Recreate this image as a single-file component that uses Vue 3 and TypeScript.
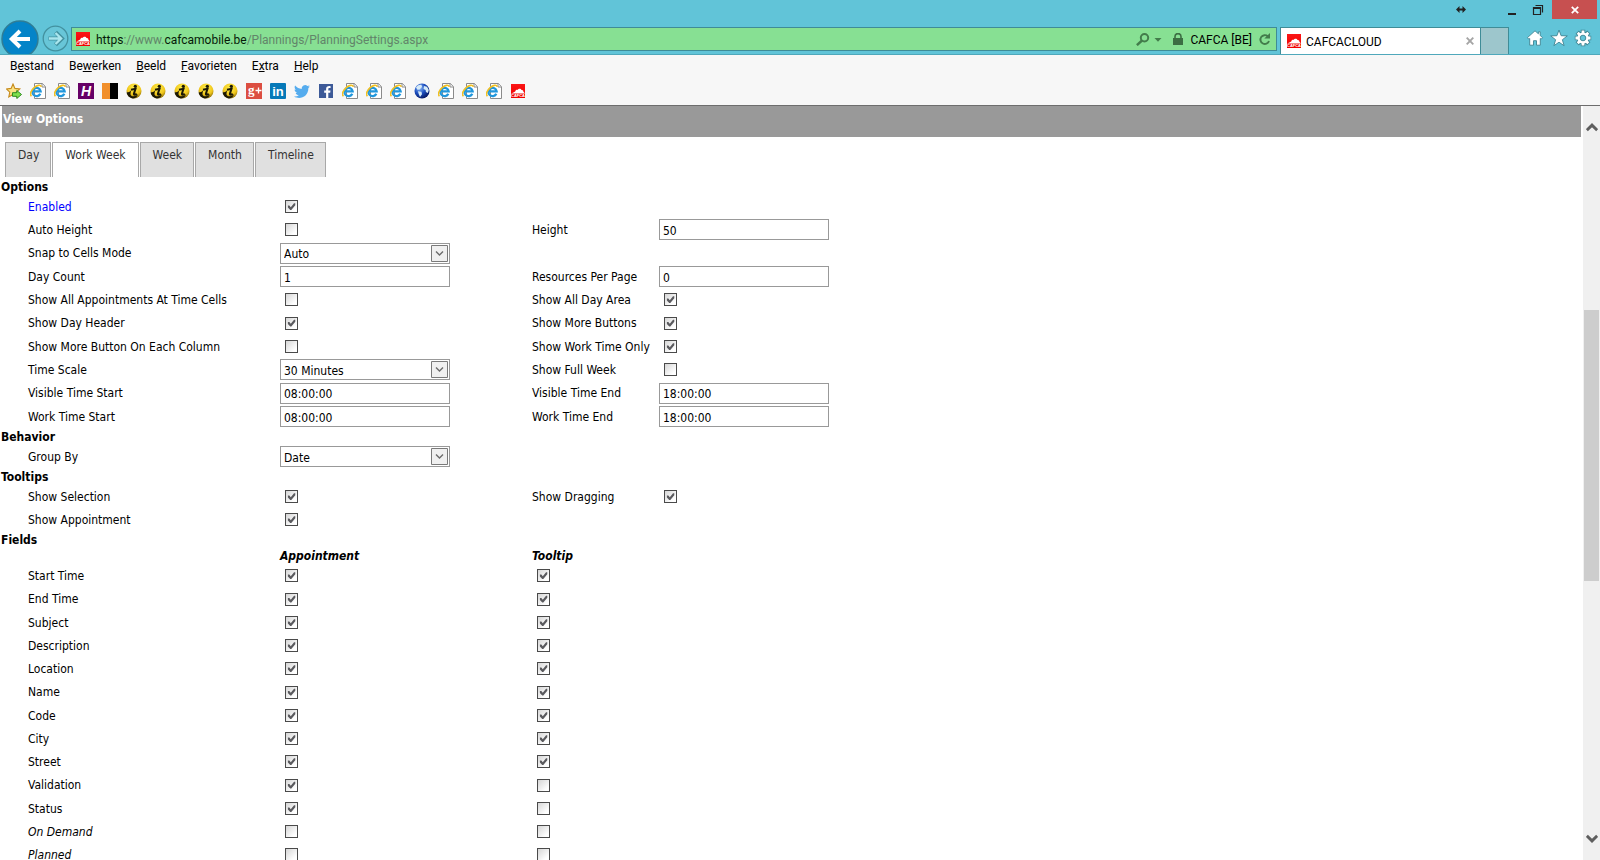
<script setup lang="ts">
import { ref } from 'vue'

interface Control {
  id: string
  label: string
  kind: 'check' | 'text' | 'select'
  value: string | boolean
  accent?: boolean
}
interface Row {
  left: Control
  right?: Control
}
interface Group {
  title: string
  rows: Row[]
}
interface Field {
  name: string
  appointment: boolean
  tooltip: boolean
  italic?: boolean
}

const menus = [
  ['B', 'e', 'stand'],
  ['Be', 'w', 'erken'],
  ['', 'B', 'eeld'],
  ['', 'F', 'avorieten'],
  ['E', 'x', 'tra'],
  ['', 'H', 'elp'],
]

const bookmarks = [
  'star', 'ie', 'ie', 'h', 'split', 'info', 'info', 'info', 'info', 'info', 'gplus',
  'linkedin', 'twitter', 'facebook', 'ie', 'ie', 'ie', 'globe', 'ie', 'ie', 'ie', 'cafca',
]

const views = ['Day', 'Work Week', 'Week', 'Month', 'Timeline']
const activeView = ref('Work Week')

const check = (id: string, label: string, value: boolean, accent = false): Control => ({ id, label, kind: 'check', value, accent })
const text = (id: string, label: string, value: string): Control => ({ id, label, kind: 'text', value })
const select = (id: string, label: string, value: string): Control => ({ id, label, kind: 'select', value })

const groups = ref<Group[]>([
  {
    title: 'Options',
    rows: [
      { left: check('enabled', 'Enabled', true, true) },
      { left: check('auto-height', 'Auto Height', false), right: text('height', 'Height', '50') },
      { left: select('snap', 'Snap to Cells Mode', 'Auto') },
      { left: text('day-count', 'Day Count', '1'), right: text('resources', 'Resources Per Page', '0') },
      { left: check('time-cells', 'Show All Appointments At Time Cells', false), right: check('all-day', 'Show All Day Area', true) },
      { left: check('day-header', 'Show Day Header', true), right: check('more-buttons', 'Show More Buttons', true) },
      { left: check('more-column', 'Show More Button On Each Column', false), right: check('work-time', 'Show Work Time Only', true) },
      { left: select('time-scale', 'Time Scale', '30 Minutes'), right: check('full-week', 'Show Full Week', false) },
      { left: text('visible-start', 'Visible Time Start', '08:00:00'), right: text('visible-end', 'Visible Time End', '18:00:00') },
      { left: text('work-start', 'Work Time Start', '08:00:00'), right: text('work-end', 'Work Time End', '18:00:00') },
    ],
  },
  { title: 'Behavior', rows: [{ left: select('group-by', 'Group By', 'Date') }] },
  {
    title: 'Tooltips',
    rows: [
      { left: check('selection', 'Show Selection', true), right: check('dragging', 'Show Dragging', true) },
      { left: check('appointment', 'Show Appointment', true) },
    ],
  },
])

const fields = ref<Field[]>([
  ...['Start Time', 'End Time', 'Subject', 'Description', 'Location', 'Name', 'Code', 'City', 'Street'].map((name) => ({
    name,
    appointment: true,
    tooltip: true,
  })),
  { name: 'Validation', appointment: true, tooltip: false },
  { name: 'Status', appointment: true, tooltip: false },
  { name: 'On Demand', appointment: false, tooltip: false, italic: true },
  { name: 'Planned', appointment: false, tooltip: false, italic: true },
])

const scroll = { before: 162, thumb: 271, after: 237 }

const cells = (row: Row): Control[] => (row.right ? [row.left, row.right] : [row.left])
</script>

<template>
  <div class="window">
    <svg class="defs" width="0" height="0" aria-hidden="true">
      <defs>
        <linearGradient id="red" x1="0" y1="0" x2="0" y2="1"><stop offset="0" stop-color="#fb1616" /><stop offset="1" stop-color="#f00000" /></linearGradient>
        <radialGradient id="gold" cx=".5" cy=".3" r=".75"><stop offset="0" stop-color="#fff04e" /><stop offset=".6" stop-color="#f0c61c" /><stop offset="1" stop-color="#6e5406" /></radialGradient>
        <radialGradient id="sea" cx=".35" cy=".3" r=".75"><stop offset="0" stop-color="#8fbcf8" /><stop offset=".5" stop-color="#1c4fc0" /><stop offset="1" stop-color="#04145e" /></radialGradient>
        <symbol id="cafca" viewBox="0 0 14 14">
          <path d="M0 0h14v14H0z" fill="url(#red)" />
          <path d="M0 9.500C2 8.800 3 8.300 4.200 7.500 4.500 6 6 5.700 6.600 5.900 7.500 4.200 10 4.400 10.500 6c1.500-.2 2 1 1.900 1.700L14 9.600z" fill="#fff" />
          <text x="7" y="13.200" text-anchor="middle" font-size="4" font-weight="700" fill="#fff" font-family="Liberation Sans, sans-serif">CAFCA</text>
        </symbol>
      </defs>
    </svg>

    <header class="chrome">
      <div class="caption">
        <svg class="resize" viewBox="0 0 10 7" width="10" height="7"><path d="M0 3.500 3.500 0v2.500h3V0L10 3.500 6.500 7V4.500h-3V7z" fill="#222" /></svg>
        <button class="cap" aria-label="Minimize"><svg viewBox="0 0 14 14" width="14" height="14"><path d="M3 10h8v2H3z" fill="#222" /></svg></button>
        <button class="cap" aria-label="Restore"><svg viewBox="0 0 14 14" width="14" height="14"><path d="M2.500 4.500h7v7h-7zM2 5.500h8M4.500 2.500h7v7" fill="none" stroke="#222" stroke-width="1.200" /></svg></button>
        <button class="cap close" aria-label="Close"><svg viewBox="0 0 8 8" width="8" height="8"><path d="m.8.800 6.400 6.400m0-6.400L.8 7.200" stroke="#fff" stroke-width="1.800" /></svg></button>
      </div>

      <nav class="navbar">
        <div class="history">
          <button class="back" aria-label="Back">
            <svg viewBox="0 0 38 38" width="38" height="38"><circle cx="19" cy="19" r="18" fill="#0484c8" stroke="#2f7d96" stroke-width="1.500" /><path d="M29 19H11m8-8-8.200 8 8.200 8" fill="none" stroke="#fff" stroke-width="4" /></svg>
          </button>
          <button class="forward" aria-label="Forward">
            <svg viewBox="0 0 27 27" width="27" height="27"><circle cx="13.500" cy="13.500" r="12.300" fill="#68c6d8" stroke="#43919f" stroke-width="1.300" /><path d="M6.500 13.500h13m-6-6.200 6.300 6.200-6.300 6.200" fill="none" stroke="#43919f" stroke-width="4.200" /><path d="M7 13.500h12m-5.500-5.500 5.600 5.500-5.600 5.500" fill="none" stroke="#a9e6ee" stroke-width="2.400" /></svg>
          </button>
        </div>

        <div class="address">
          <svg width="14" height="14"><use href="#cafca" /></svg>
          <div class="url" role="textbox" contenteditable="true" spellcheck="false"><b>https</b>://www.<b>cafcamobile.be</b>/Plannings/PlanningSettings.aspx</div>
          <button class="tool" aria-label="Search">
            <svg viewBox="0 0 26 13" width="26" height="13"><circle cx="8.500" cy="4.700" r="3.700" fill="none" stroke="#437c4b" stroke-width="2" /><path d="M6 7.500.9 12.200" stroke="#437c4b" stroke-width="2.400" /><path d="M18.500 5h7L22 8.800z" fill="#437c4b" /></svg>
          </button>
          <button class="cert">
            <svg viewBox="0 0 10 12" width="10" height="12"><path d="M0 5h10v7H0z" fill="#3c6e43" /><path d="M2 6V3.600a3 3 0 0 1 6 0V6" fill="none" stroke="#3c6e43" stroke-width="1.600" /></svg>
            <span>CAFCA [BE]</span>
          </button>
          <button class="tool" aria-label="Refresh">
            <svg viewBox="0 0 12 13" width="12" height="13"><path d="M8.800 3.300A4.400 4.400 0 1 0 10 8" fill="none" stroke="#437c4b" stroke-width="1.900" /><path d="M11 0v5.500H5.300z" fill="#437c4b" /></svg>
          </button>
        </div>

        <div class="pages">
          <div class="page-tab">
            <svg width="14" height="14"><use href="#cafca" /></svg>
            <span>CAFCACLOUD</span>
            <button class="tool" aria-label="Close tab"><svg viewBox="0 0 8 8" width="8" height="8"><path d="m.7.700 6.600 6.600m0-6.600L.7 7.300" stroke="#a5a5a5" stroke-width="1.900" /></svg></button>
          </div>
          <button class="new-tab" aria-label="New tab"></button>
        </div>

        <div class="actions">
          <button class="tool" aria-label="Home">
            <svg viewBox="0 0 18 18" width="18" height="18"><path d="M9 1.800 1.500 8.600l1.300 1.600.9-.7v6.700h3.800v-4.500h3v4.500h3.800V9.500l.9.700 1.300-1.600-2.300-2.100V2.800h-1.800v2z" fill="#fff" stroke="#3d8593" stroke-width=".9" /></svg>
          </button>
          <button class="tool" aria-label="Favorites">
            <svg viewBox="0 0 18 18" width="18" height="18"><path d="m9 1 2.100 5.700 6.200.2-4.900 3.800 1.700 6L9 13.200l-5.100 3.500 1.700-6L.7 6.900l6.200-.2z" fill="#fff" stroke="#3d8593" stroke-width=".9" /></svg>
          </button>
          <button class="tool" aria-label="Tools">
            <svg viewBox="0 0 18 18" width="18" height="18"><g stroke="#3d8593" stroke-width="4.600"><path d="M9 .8v16.400M.8 9h16.400M3.200 3.200l11.600 11.600m0-11.600L3.200 14.800" /></g><circle cx="9" cy="9" r="6.400" fill="#3d8593" /><g stroke="#fff" stroke-width="2.800"><path d="M9 1.500v15M1.500 9h15M3.700 3.700l10.600 10.600m0-10.600L3.700 14.300" /></g><circle cx="9" cy="9" r="5.600" fill="#fff" /><circle cx="9" cy="9" r="2.800" fill="#61c4d8" stroke="#3d8593" stroke-width=".9" /></svg>
          </button>
        </div>
      </nav>
    </header>

    <div class="bars">
      <div class="menus">
        <button v-for="m in menus" :key="m.join('')">{{ m[0] }}<u>{{ m[1] }}</u>{{ m[2] }}</button>
      </div>
      <div class="bookmarks">
        <button v-for="(kind, i) in bookmarks" :key="i" :aria-label="kind">
          <svg viewBox="0 0 16 16" width="16" height="16">
            <g v-if="kind === 'star'">
              <path d="m7 1 1.900 4.400 4.900.5-3.600 3.300 1 4.800L7 11.500 2.800 14l1-4.800L.4 5.900l4.700-.5z" fill="#fbe384" stroke="#c68a1c" stroke-width="1.100" />
              <path d="M6.500 9.700h4.300V7.500l4.700 4-4.700 4v-2.200H6.500z" fill="#7fe04c" stroke="#2d8a23" />
            </g>
            <g v-else-if="kind === 'ie'">
              <path d="M4.500.5h7.800l3.200 3.200v11.800h-11z" fill="#fff" stroke="#8b8b8b" />
              <path d="M12 .5v3.500h3.500" fill="none" stroke="#8b8b8b" />
              <path d="M10.300 10.700A4.100 4.100 0 1 1 10.600 8.300H3.600" fill="none" stroke="#2197dc" stroke-width="2.300" />
              <path d="M1.500 13.200C-.8 11.300 1 7.500 4.200 4.700 7 2.200 10.500 1.300 11.300 3.700" fill="none" stroke="#f2c021" stroke-width="1.600" />
            </g>
            <g v-else-if="kind === 'h'">
              <path d="M0 0h16v16H0z" fill="#660066" />
              <text x="8" y="13" text-anchor="middle" font-size="14" font-weight="700" font-style="italic" fill="#fff" font-family="Liberation Sans, sans-serif">H</text>
            </g>
            <g v-else-if="kind === 'split'"><path d="M0 0h8v16H0z" fill="#f18f2b" /><path d="M8 0h8v16H8z" fill="#000" /></g>
            <g v-else-if="kind === 'info'">
              <circle cx="8" cy="8" r="7.500" fill="url(#gold)" />
              <path d="M.6 9.500c1.900 0 3.400-1 4.500-2.300L4.500 10.500c-.3 2.300 1.500 3.200 3.800 2.700 1.400-.3 2.600-1 3.600-2-.6 2.400-2.200 4-4.900 4.200C3.900 15.200 1.200 12.900.6 9.500z" fill="#1b1805" />
              <path d="M5 6.800 9.500 5.800 7.900 10.800c-.2 1.200 1 1.100 2.800 0" fill="none" stroke="#1b1805" stroke-width="2" />
              <circle cx="9.300" cy="3.300" r="1.600" fill="#1b1805" />
            </g>
            <g v-else-if="kind === 'gplus'">
              <path d="M0 0h16v16H0z" fill="#dc4e41" />
              <text x="2" y="11" font-size="13" fill="#fff" font-weight="700" font-family="Liberation Serif, serif">g</text>
              <path d="M12.500 4.500v6m-3-3h6" stroke="#fff" stroke-width="1.300" />
            </g>
            <g v-else-if="kind === 'linkedin'">
              <rect width="16" height="16" rx="1" fill="#0679b8" />
              <text x="8" y="13" text-anchor="middle" font-size="13" font-weight="700" fill="#fff" font-family="Liberation Sans, sans-serif">in</text>
            </g>
            <path v-else-if="kind === 'twitter'" fill="#55acee" d="M16 3.500c-.6.300-1.200.4-1.900.5.700-.4 1.200-1 1.400-1.800-.6.400-1.300.6-2.100.8a3.300 3.300 0 0 0-5.600 3C5.100 5.900 2.700 4.600 1.100 2.600c-.9 1.500-.4 3.400 1 4.400-.5 0-1-.2-1.500-.4 0 1.600 1.100 2.900 2.600 3.200-.5.100-1 .2-1.500.1.400 1.300 1.600 2.200 3.100 2.300A6.600 6.600 0 0 1 0 13.500c5.600 3.500 14.400.7 14.400-8.400.600-.4 1.200-1 1.600-1.600z" />
            <g v-else-if="kind === 'facebook'">
              <path d="M1 1h14v14H1z" fill="#3d5a98" />
              <path d="M10.300 15V9.700h1.900l.3-2.200h-2.200V6.200c0-.7.300-1.100 1.200-1.100h1.100V3.200C10 2.800 8.100 3.500 8.100 5.900v1.600H6.200v2.200h1.900V15z" fill="#fff" />
            </g>
            <g v-else-if="kind === 'globe'">
              <circle cx="8" cy="8" r="7.500" fill="url(#sea)" />
              <path d="M2 4.500C3.500 2 6 1.500 7.500 1.700L8 4 5.500 6.500l-2 .3zM4 8.300l3.500.5.500 2.500L6 14l-1.300-3zM10 3l3 .8 1.800 3.200-.9 3-2-1-.3-2L9.500 6z" fill="#d5eaf7" />
            </g>
            <svg v-else x="1" y="1" width="14" height="14"><use href="#cafca" /></svg>
          </svg>
        </button>
      </div>
    </div>

    <div class="viewport">
      <main class="content">
        <h1>View Options</h1>
        <div class="tabs" role="tablist">
          <button
            v-for="v in views"
            :key="v"
            role="tab"
            :aria-selected="v === activeView"
            :class="{ active: v === activeView }"
            @click="activeView = v"
          >{{ v }}</button>
        </div>

        <section v-for="g in groups" :key="g.title">
          <h2>{{ g.title }}</h2>
          <div class="rows">
            <div v-for="row in g.rows" :key="row.left.id" class="row">
              <template v-for="c in cells(row)" :key="c.id">
                <label :for="c.id" :class="{ accent: c.accent }">{{ c.label }}</label>
                <div class="control">
                  <input v-if="c.kind === 'check'" :id="c.id" v-model="c.value" type="checkbox" />
                  <input v-else-if="c.kind === 'text'" :id="c.id" v-model="c.value" class="box" type="text" />
                  <div v-else class="drop">
                    <select :id="c.id" v-model="c.value" class="box"><option>{{ c.value }}</option></select>
                    <svg viewBox="0 0 17 17" width="17" height="17"><path d="M.5.5h16v16H.5z" fill="#f0f0f0" stroke="#7a7a7a" /><path d="m5 6.500 3.500 3.500L12 6.500" fill="none" stroke="#6c6c6c" stroke-width="1.400" /></svg>
                  </div>
                </div>
              </template>
            </div>
          </div>
        </section>

        <section>
          <h2>Fields</h2>
          <table>
            <thead>
              <tr><td></td><th id="col-appointment" scope="col">Appointment</th><th id="col-tooltip" scope="col">Tooltip</th></tr>
            </thead>
            <tbody>
              <tr v-for="(f, i) in fields" :key="f.name">
                <th :id="`field-${i}`" scope="row" :class="{ italic: f.italic }">{{ f.name }}</th>
                <td><input v-model="f.appointment" type="checkbox" :aria-labelledby="`field-${i} col-appointment`" /></td>
                <td><input v-model="f.tooltip" type="checkbox" :aria-labelledby="`field-${i} col-tooltip`" /></td>
              </tr>
            </tbody>
          </table>
        </section>
      </main>

      <div class="scrollbar">
        <button aria-label="Scroll up"><svg viewBox="0 0 12 10" width="12" height="10"><path d="m.8 8.200 5.200-5 5.200 5" fill="none" stroke="#5e5e5e" stroke-width="3" /></svg></button>
        <div :style="{ flexGrow: scroll.before }"></div>
        <div class="thumb" :style="{ flexGrow: scroll.thumb }"></div>
        <div :style="{ flexGrow: scroll.after }"></div>
        <button aria-label="Scroll down"><svg viewBox="0 0 12 10" width="12" height="10"><path d="m.8 1.800 5.200 5 5.200-5" fill="none" stroke="#5e5e5e" stroke-width="3" /></svg></button>
      </div>
    </div>
  </div>
</template>

<style>
body {
  margin: 0;
  background: #fff;
}
</style>

<style scoped>
.window {
  display: flex;
  flex-direction: column;
  height: 100vh;
  overflow: hidden;
  background: #fff;
  color: #000;
  font: 12px/16px "DejaVu Sans Condensed", "DejaVu Sans", sans-serif;
}
.defs {
  position: absolute;
}
button {
  margin: 0;
  padding: 0;
  border: 0;
  background: none;
  color: inherit;
  font: inherit;
}
svg {
  display: block;
  flex: none;
}

/* Browser frame */
.chrome {
  flex: none;
  background: #61c4d8;
  border-bottom: 1px solid #4fa8bb;
  font-family: Roboto, sans-serif;
}
.caption {
  display: flex;
  justify-content: flex-end;
  height: 19px;
  padding-right: 3px;
}
.resize {
  margin: 6px 33px 0 0;
}
.cap {
  display: flex;
  align-items: center;
  justify-content: center;
  width: 26px;
}
.cap.close {
  width: 45px;
  margin-left: 1px;
  background: #c75050;
}
.navbar {
  display: flex;
  align-items: flex-end;
  height: 35px;
}
.history {
  display: flex;
  align-items: flex-start;
  height: 34px;
  padding-left: 1px;
  gap: 3px;
}
.back {
  height: 34px;
  overflow: hidden;
}
.forward {
  padding-top: 5px;
}
.address {
  display: flex;
  flex: 1;
  align-items: center;
  height: 22px;
  margin: 0 3px 3px 2px;
  padding: 0 5px 0 4px;
  border: 1px solid #3f8c97;
  background: #87e093;
}
.url {
  flex: 1;
  padding-top: 2px;
  margin-left: 6px;
  color: #62856a;
  outline: none;
}
.url b {
  color: #061a08;
  font-weight: 400;
}
.cert {
  display: flex;
  align-items: center;
  gap: 7px;
  margin: 0 7px 0 11px;
}
.cert span {
  padding-top: 2px;
}
.pages {
  display: flex;
  height: 27px;
}
.page-tab {
  display: flex;
  align-items: center;
  width: 187px;
  padding: 0 6px;
  border: 1px solid #3f8c97;
  border-bottom: 0;
  background: #fff;
}
.page-tab span {
  flex: 1;
  padding-top: 2px;
  margin-left: 5px;
}
.new-tab {
  width: 28px;
  border: 1px solid #3f8c97;
  border-width: 1px 1px 0 0;
  background: #9dc6cc;
}
.actions {
  display: flex;
  gap: 6px;
  margin: 0 8px 7px 17px;
}

.bars {
  flex: none;
  border-bottom: 1px solid #6d6d6d;
  background: #f7f7f7;
}
.menus {
  display: flex;
  gap: 15px;
  padding: 3px 10px 5px;
  font-family: Roboto, sans-serif;
}
.bookmarks {
  display: flex;
  gap: 8px;
  padding: 4px 6px 6px;
}

/* Page */
.viewport {
  display: flex;
  flex: 1;
  min-height: 0;
}
.content {
  flex: 1;
  min-width: 0;
  overflow: hidden;
}
h1,
h2 {
  margin: 0;
  font-size: 12px;
  font-weight: 700;
}
h1 {
  margin: 0 2px;
  padding: 5px 0 10px 1px;
  background: #999;
  color: #fff;
}
h2 {
  padding: 1px 0 0 1px;
}
.tabs {
  display: flex;
  gap: 1px;
  padding: 5px 5px 1px;
}
.tabs button {
  padding: 4px 11px 14px 12px;
  border: 1px solid #a8a8a8;
  border-bottom: 0;
  background: #e0e0e0;
  color: #333;
}
.tabs .active {
  padding-right: 12px;
  background: #fff;
}
.row {
  display: grid;
  grid-template-columns: 252px 252px 127px 170px;
  align-items: center;
  height: 23px;
  padding-left: 28px;
}
.rows .row:nth-child(3n) {
  height: 24px;
}
.accent {
  color: #00f;
}
.box {
  display: block;
  box-sizing: border-box;
  width: 170px;
  height: 21px;
  margin: 0;
  padding: 2px 3px 0;
  border: 1px solid #999;
  border-radius: 0;
  background: #fff;
  color: #000;
  font: inherit;
  appearance: none;
}
.drop {
  display: grid;
  width: 170px;
  align-items: center;
}
.drop > * {
  grid-area: 1 / 1;
}
.drop svg {
  justify-self: end;
  margin-right: 2px;
  pointer-events: none;
}
input[type="checkbox"] {
  display: grid;
  place-items: center;
  box-sizing: border-box;
  width: 13px;
  height: 13px;
  margin: 0 5px;
  border: 1px solid #4a4a4a;
  background: linear-gradient(135deg, #d6d6d6, #fff 80%);
  appearance: none;
}
input[type="checkbox"]:checked::before {
  content: "";
  width: 9px;
  height: 9px;
  background: #5a5a5e;
  clip-path: polygon(10% 38%, 26% 38%, 42% 58%, 78% 14%, 92% 14%, 92% 36%, 48% 88%, 36% 88%, 10% 60%);
}
table {
  border-collapse: collapse;
  margin-left: 28px;
}
th,
td {
  width: 252px;
  height: 23px;
  padding: 0;
  text-align: left;
  font-weight: 400;
}
thead th,
thead td {
  height: 16px;
}
thead th {
  font-weight: 700;
  font-style: italic;
}
tbody tr:nth-child(4n + 2) th {
  height: 24px;
}
.italic {
  font-style: italic;
}

.scrollbar {
  display: flex;
  flex-direction: column;
  width: 17px;
  background: #f0f0f0;
}
.scrollbar > div {
  flex-basis: 0;
}
.scrollbar button {
  display: flex;
  align-items: center;
  justify-content: center;
  height: 42px;
}
.thumb {
  margin: 0 1px;
  background: #cdcdcd;
}
</style>
